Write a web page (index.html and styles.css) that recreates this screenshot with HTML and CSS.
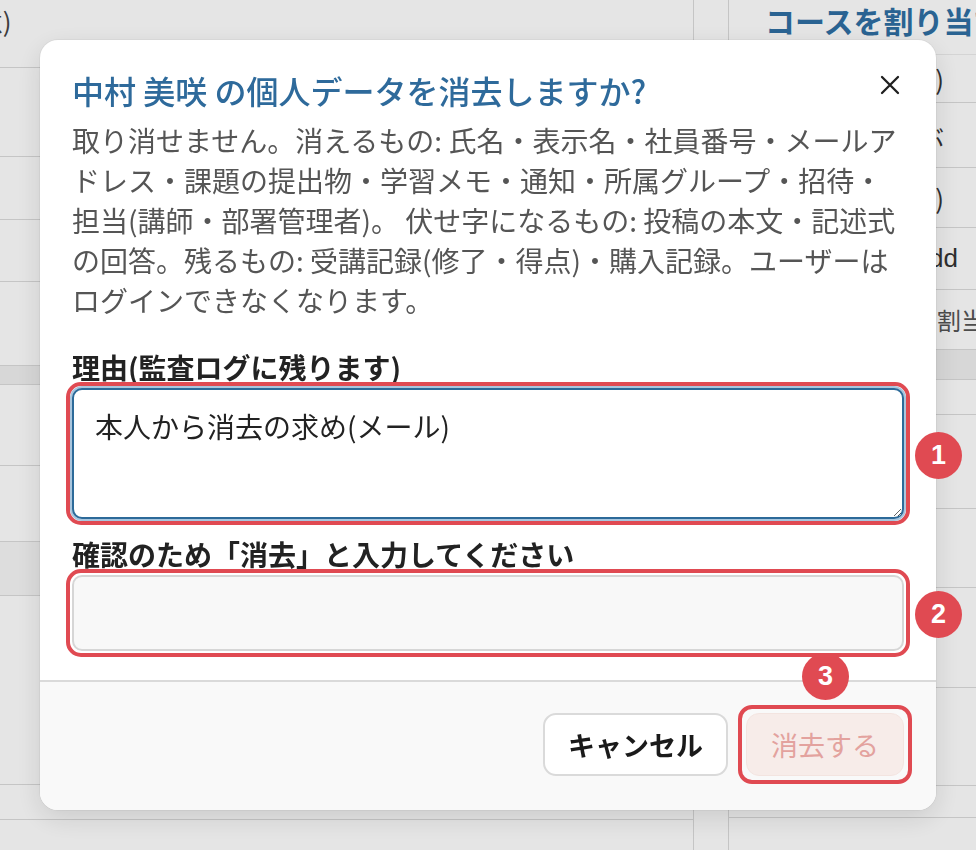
FILE: index.html
```
<!DOCTYPE html>
<html lang="ja">
<head>
    <meta charset="UTF-8">
    <meta name="viewport" content="width=device-width, initial-scale=1.0">
    <title>個人データの消去</title>
    <link rel="stylesheet" href="styles.css">
</head>
<body>

<div class="page">
    <div class="main-col">
        <div class="row r1"><span class="cut">(任意)</span></div>
        <div class="row r2"></div>
        <div class="row r3"></div>
        <div class="row r4"></div>
        <div class="row r5"></div>
        <div class="row band r6"></div>
        <div class="row r7"></div>
        <div class="row r8"></div>
        <div class="row band-light r9"></div>
        <div class="row r10"></div>
        <div class="row r11"></div>
    </div>
    <div class="gap-col"></div>
    <div class="side-col">
        <h2 class="side-title">コースを割り当てる</h2>
        <div class="side-row s1">対象の人(必須)</div>
        <div class="side-row s2">コースを選ぶ</div>
        <div class="side-row s3">期限(任意)</div>
        <div class="side-row s4 date">yyyy/mm/dd</div>
        <div class="side-row s5 hint">割当を保存</div>
        <div class="side-row band s6"></div>
        <div class="side-row s7"></div>
        <div class="side-row s8"></div>
        <div class="side-row s9"></div>
        <div class="side-row s10"></div>
        <div class="side-row s11"></div>
        <div class="side-row s12"></div>
    </div>
</div>

<div class="overlay"></div>

<div class="modal" role="dialog" aria-modal="true">
    <div class="modal-body">
        <div class="modal-head">
            <h3 class="modal-title">中村 美咲 の個人データを消去しますか?</h3>
            <button class="close-btn" aria-label="閉じる">
                <svg width="24" height="24" viewBox="0 0 24 24">
                    <path d="M4 4 L20 20 M20 4 L4 20" stroke="#1f1f1f" stroke-width="2.3" stroke-linecap="round"/>
                </svg>
            </button>
        </div>
        <p class="modal-text">取り消せません。消えるもの: 氏名・表示名・社員番号・メールア<br>ドレス・課題の提出物・学習メモ・通知・所属グループ・招待・<br>担当(講師・部署管理者)。 伏せ字になるもの: 投稿の本文・記述式<br>の回答。残るもの: 受講記録(修了・得点)・購入記録。ユーザーは<br>ログインできなくなります。</p>

        <label class="field-label" for="reason">理由(監査ログに残ります)</label>
        <div class="mark">
            <textarea id="reason" class="reason">本人から消去の求め(メール)</textarea>
            <span class="badge badge-side">1</span>
        </div>

        <label class="field-label" for="confirm">確認のため「消去」と入力してください</label>
        <div class="mark">
            <input id="confirm" class="confirm-input" type="text">
            <span class="badge badge-side">2</span>
        </div>
    </div>

    <div class="modal-foot">
        <button class="btn btn-cancel">キャンセル</button>
        <div class="mark mark-btn">
            <button class="btn btn-danger" disabled>消去する</button>
            <span class="badge badge-top">3</span>
        </div>
    </div>
</div>

</body>
</html>
```

FILE: styles.css
```
body {
    margin: 0;
    background-color: #fff;
    font-family: "Noto Sans CJK JP", "Noto Sans", sans-serif;
    color: #222;
    overflow: hidden;
}

/* page under the dialog */
.page {
    display: grid;
    grid-template-columns: 694px 35px minmax(0, 1fr);
    height: 850px;
}
.main-col {
    border-right: 1px solid #dcdcdc;
    overflow: hidden;
}
.gap-col {
    border-right: 1px solid #dcdcdc;
}
.side-col {
    overflow: hidden;
}
.row {
    border-bottom: 1px solid #dcdcdc;
    box-sizing: border-box;
}
.r1 { height: 68px; font-size: 26px; color: #444; padding-top: 2px; }
.r2 { height: 89px; }
.r3 { height: 63px; }
.r4 { height: 62px; }
.r5 { height: 84px; }
.r6 { height: 19px; }
.r7 { height: 81px; }
.r8 { height: 76px; }
.r9 { height: 54px; }
.r10 { height: 189px; }
.r11 { height: 35px; }
.band { background-color: #f0f0f0; }
.band-light { background-color: #f6f6f6; }
.cut {
    display: inline-block;
    margin-left: -58px;
}

.side-title {
    margin: 0;
    height: 55px;
    box-sizing: border-box;
    padding-left: 36px;
    font-size: 30px;
    font-weight: 700;
    line-height: 40px;
    color: #2f6fa3;
    white-space: nowrap;
    overflow: hidden;
    border-bottom: 1px solid #ececec;
}
.side-row {
    display: flex;
    align-items: center;
    justify-content: flex-end;
    padding-right: 32px;
    box-sizing: border-box;
    border-bottom: 1px solid #dcdcdc;
    font-size: 26px;
    color: #333;
    white-space: nowrap;
    overflow: hidden;
}
.side-row.date {
    font-family: "Liberation Sans", Arial, sans-serif;
    padding-right: 18px;
}
.side-row.hint {
    justify-content: flex-start;
    padding-left: 208px;
    font-size: 24px;
    color: #555;
}
.s1 { height: 48px; }
.s2 { height: 65px; }
.s3 { height: 60px; }
.s4 { height: 62px; }
.s5 { height: 60px; }
.s6 { height: 30px; }
.s7 { height: 35px; }
.s8 { height: 94px; }
.s9 { height: 79px; }
.s10 { height: 100px; }
.s11 { height: 98px; }
.s12 { height: 32px; }

.overlay {
    position: fixed;
    inset: 0;
    background-color: rgba(0, 0, 0, 0.1);
}

/* dialog */
.modal {
    position: fixed;
    top: 40px;
    left: 40px;
    width: 896px;
    background-color: #fff;
    border-radius: 18px;
    box-shadow: 0 8px 28px rgba(0, 0, 0, 0.12), 0 0 0 1px rgba(0, 0, 0, 0.04);
}
.modal-body {
    padding: 30px 32px 23px;
}
.modal-head {
    display: flex;
    justify-content: space-between;
    align-items: center;
}
.modal-title {
    margin: 0;
    font-size: 32px;
    font-weight: 500;
    line-height: 40px;
    color: #2e6a9b;
}
.close-btn {
    background: none;
    border: none;
    padding: 0;
    margin-top: -10px;
    margin-right: 2px;
    width: 24px;
    height: 24px;
    cursor: pointer;
}
.modal-text {
    margin: 10px 0 0;
    font-size: 28px;
    line-height: 40px;
    color: #555;
}
.field-label {
    display: block;
    margin-top: 30px;
    font-size: 28px;
    line-height: 34px;
    font-weight: 700;
    color: #222;
}
.field-label + .mark {
    margin-top: -2px;
}
.mark {
    position: relative;
    border: 4px solid #e04a52;
    border-radius: 15px;
    padding: 2px;
    margin: 0 -6px;
}
.mark + .field-label {
    margin-top: 12px;
}
.reason {
    display: block;
    box-sizing: border-box;
    width: 100%;
    height: 131px;
    padding: 16px 21px;
    border: 2px solid #2c6a99;
    border-radius: 10px;
    box-shadow: 0 0 0 2px #a9c6de;
    font-family: inherit;
    font-size: 28px;
    line-height: 40px;
    color: #222;
    resize: vertical;
    outline: none;
}
.confirm-input {
    display: block;
    box-sizing: border-box;
    width: 100%;
    height: 76px;
    border: 2px solid #d6d6d6;
    border-radius: 10px;
    background-color: #f8f8f8;
    font-family: inherit;
    font-size: 28px;
    padding: 0 20px;
    outline: none;
}

.badge {
    position: absolute;
    width: 47px;
    height: 47px;
    border-radius: 50%;
    background-color: #e04a52;
    color: #fff;
    font-family: "Liberation Sans", Arial, sans-serif;
    font-weight: 700;
    font-size: 27px;
    line-height: 47px;
    text-align: center;
}
.badge-side {
    left: calc(100% + 9px);
    top: 50%;
    margin-top: -22px;
}
.badge-top {
    left: 50%;
    margin-left: -23px;
    top: -56px;
}

.modal-foot {
    display: flex;
    justify-content: flex-end;
    align-items: center;
    gap: 10px;
    padding: 23px 24px 26px;
    background-color: #f9f9f9;
    border-top: 2px solid #dadada;
    border-radius: 0 0 18px 18px;
}
.mark-btn {
    margin: 0;
    padding: 4px;
    border-radius: 14px;
}
.btn {
    height: 63px;
    border-radius: 13px;
    font-family: inherit;
    font-size: 27px;
    cursor: pointer;
}
.btn-cancel {
    padding: 0 23px;
    background-color: #fff;
    border: 2px solid #dadada;
    font-weight: 700;
    color: #1a1a1a;
}
.btn-danger {
    display: block;
    padding: 0 24px;
    background-color: #f7ece9;
    border: 1px solid #f3e4e0;
    color: #e3a29e;
    cursor: default;
}
```
